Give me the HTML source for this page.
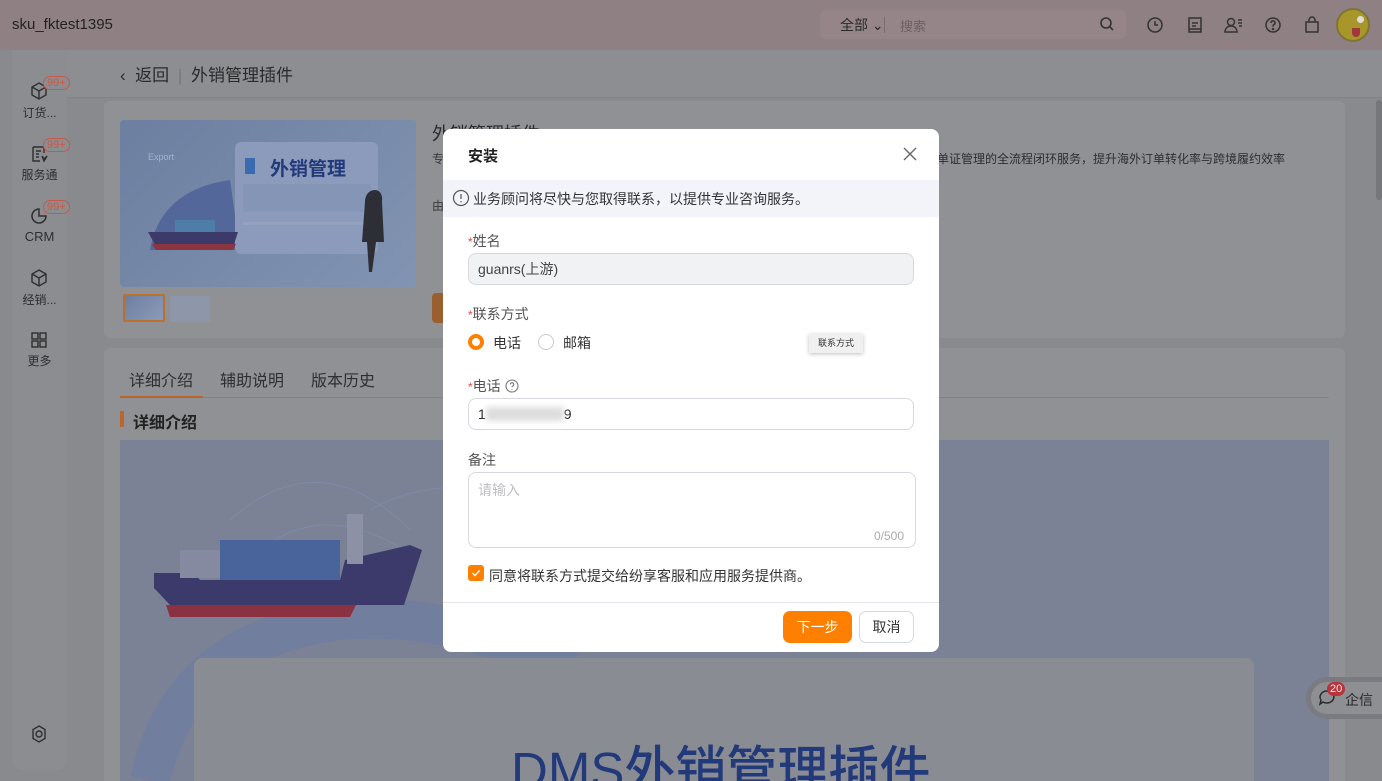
<!DOCTYPE html>
<html><head><meta charset="utf-8">
<style>
*{box-sizing:border-box;margin:0;padding:0}
html,body{width:1382px;height:781px;overflow:hidden}
body{position:relative;background:#898a8e;font-family:"Liberation Sans","Noto Sans CJK SC",sans-serif;color:#333}
.abs{position:absolute}
.hdr{left:0;top:0;width:1382px;height:50px;background:#8f8084}
.side{left:12px;top:50px;width:55px;height:720px;background:#8c8d91;border-radius:0 0 10px 10px}
.crumb{left:67px;top:50px;width:1315px;height:48px;background:#8d8e92;border-bottom:1px solid #828388}
.card{background:#909195;border-radius:6px}
.sitem{position:absolute;left:12px;width:55px;text-align:center;font-size:12px;color:#2e2e30}
.badge{position:absolute;left:43px;font-size:11px;color:#c55a4a;border:1px solid #c55a4a;border-radius:8px;padding:0 3px;line-height:12px;background:#8c8d91}
.modal{left:443px;top:129px;width:496px;height:523px;background:#fff;border-radius:8px;overflow:hidden}
.lbl{position:absolute;left:25px;font-size:14px;color:#555}
.lbl b{color:#e5483a;font-weight:normal;font-size:12px}
.inp{position:absolute;left:25px;width:446px;height:32px;border:1px solid #d6d8de;border-radius:8px;font-size:14px;padding-left:9px;line-height:30px}
</style></head><body>
<div class="abs hdr"></div>
<div class="abs" style="left:12px;top:16px;font-size:15px;color:#222">sku_fktest1395</div>
<div class="abs" style="left:820px;top:10px;width:306px;height:29px;background:#958589;border-radius:6px"></div>
<div class="abs" style="left:840px;top:15px;font-size:14px;color:#2a2a2a">全部 ⌄</div>
<div class="abs" style="left:884px;top:17px;width:1px;height:16px;background:#7a6c70"></div>
<div class="abs" style="left:900px;top:16px;font-size:13px;color:#6c6064">搜索</div>
<svg class="abs" style="left:1098px;top:15px" width="18" height="18" viewBox="0 0 18 18" fill="none" stroke="#333" stroke-width="1.6"><circle cx="8" cy="8" r="5"/><path d="M12 12l3 3"/></svg>
<svg class="abs" style="left:1144px;top:14px" width="22" height="22" viewBox="0 0 22 22" fill="none" stroke="#333" stroke-width="1.5"><circle cx="11" cy="11" r="7"/><path d="M11 7v4h3"/></svg>
<svg class="abs" style="left:1184px;top:14px" width="22" height="22" viewBox="0 0 22 22" fill="none" stroke="#333" stroke-width="1.5"><path d="M5 4h12v14H5z"/><path d="M8 9h6M8 12h4M5 15h12"/></svg>
<svg class="abs" style="left:1222px;top:14px" width="24" height="22" viewBox="0 0 24 22" fill="none" stroke="#333" stroke-width="1.5"><circle cx="9" cy="8" r="3.5"/><path d="M3 18c0-4 3-6 6-6s6 2 6 6zM16 6h4M16 9h4M17 12h3"/></svg>
<svg class="abs" style="left:1262px;top:14px" width="22" height="22" viewBox="0 0 22 22" fill="none" stroke="#333" stroke-width="1.5"><circle cx="11" cy="11" r="7"/><path d="M9 9a2 2 0 1 1 3 1.6c-1 .5-1 1-1 2"/><circle cx="11" cy="15" r=".5"/></svg>
<svg class="abs" style="left:1301px;top:14px" width="22" height="22" viewBox="0 0 22 22" fill="none" stroke="#333" stroke-width="1.5"><path d="M5 8h12v10H5zM8 8V6a3 3 0 0 1 6 0v2"/></svg>
<div class="abs" style="left:1336px;top:8px;width:34px;height:34px;border-radius:50%;background:#a8962a;border:2px solid #7d7436"></div>
<div class="abs" style="left:1352px;top:28px;width:8px;height:9px;background:#a0383c;border-radius:0 0 5px 5px"></div>
<div class="abs" style="left:1357px;top:16px;width:7px;height:7px;border-radius:50%;background:#ddd"></div>

<div class="abs side"></div>
<div class="abs crumb"></div>
<div class="abs" style="left:120px;top:61px;font-size:17px;color:#2a2a2c">&lsaquo;&nbsp; 返回 <span style="color:#777;margin:0 4px">|</span> 外销管理插件</div>

<svg class="abs" style="left:29px;top:81px" width="20" height="20" viewBox="0 0 20 20" fill="none" stroke="#2e2e30" stroke-width="1.4"><path d="M10 2l7 4v8l-7 4-7-4V6zM3 6l7 4 7-4M10 10v8"/></svg>
<div class="badge" style="top:76px">99+</div>
<div class="sitem" style="top:104px">订货...</div>
<svg class="abs" style="left:29px;top:144px" width="20" height="20" viewBox="0 0 20 20" fill="none" stroke="#2e2e30" stroke-width="1.4"><path d="M4 3h11v6M4 3v14h7M7 7h5M7 10h3M7 13h3"/><path d="M13 12l2 3 3-3-3 5z"/></svg>
<div class="badge" style="top:138px">99+</div>
<div class="sitem" style="top:166px">服务通</div>
<svg class="abs" style="left:29px;top:206px" width="20" height="20" viewBox="0 0 20 20" fill="none" stroke="#2e2e30" stroke-width="1.5"><path d="M10 3a7 7 0 1 0 7 7h-7z"/></svg>
<div class="badge" style="top:200px">99+</div>
<div class="sitem" style="top:229px;font-size:13px">CRM</div>
<svg class="abs" style="left:29px;top:268px" width="20" height="20" viewBox="0 0 20 20" fill="none" stroke="#2e2e30" stroke-width="1.4"><path d="M10 2l7 4v8l-7 4-7-4V6zM3 6l7 4 7-4M10 10v8"/></svg>
<div class="sitem" style="top:291px">经销...</div>
<svg class="abs" style="left:30px;top:331px" width="18" height="18" viewBox="0 0 18 18" fill="none" stroke="#2e2e30" stroke-width="1.4"><rect x="2" y="2" width="6" height="6"/><rect x="10" y="2" width="6" height="6"/><rect x="2" y="10" width="6" height="6"/><rect x="10" y="10" width="6" height="6"/></svg>
<div class="sitem" style="top:352px">更多</div>
<svg class="abs" style="left:29px;top:724px" width="20" height="20" viewBox="0 0 20 20" fill="none" stroke="#2e2e30" stroke-width="1.4"><path d="M10 2l6 3.5v9L10 18l-6-3.5v-9z"/><circle cx="10" cy="10" r="3"/></svg>

<div class="abs card" style="left:104px;top:101px;width:1241px;height:237px"></div>
<div class="abs" style="left:120px;top:120px;width:296px;height:167px;border-radius:4px;background:linear-gradient(135deg,#6d7fa0,#8194b3)"></div>
<svg class="abs" style="left:120px;top:120px" width="296" height="167">
<text x="28" y="40" font-size="9" fill="#a4b2cc" font-family="Liberation Sans">Export</text>
<path d="M30 130 Q40 70 110 60 L120 130z" fill="#53679a"/>
<rect x="115" y="22" width="143" height="112" rx="6" fill="#8c9abb"/>
<rect x="125" y="38" width="10" height="16" fill="#3a6ab0"/>
<text x="150" y="55" font-size="19" fill="#233a7a" font-family="Noto Sans CJK SC" font-weight="bold">外销管理</text>
<rect x="123" y="64" width="128" height="28" fill="#8595b6"/>
<rect x="123" y="102" width="128" height="3" fill="#95a2bf"/>
<path d="M28 112h90l-6 18H38z" fill="#3b3a68"/><path d="M32 124h84l-3 6H36z" fill="#8c3540"/>
<rect x="55" y="100" width="40" height="12" fill="#4e7ea8"/>
<path d="M255 70c5 0 8 5 7 12l2 40h-8l-4 30h-3l-2-30h-5l3-40c0-8 5-12 10-12z" fill="#2e2e36"/>
</svg>
<div class="abs" style="left:123px;top:294px;width:42px;height:28px;border:2px solid #b9702f;background:linear-gradient(135deg,#6d7fa0,#8d9ab8);border-radius:2px"></div>
<div class="abs" style="left:170px;top:296px;width:40px;height:26px;background:#8e97aa;border-radius:2px"></div>
<div class="abs" style="left:432px;top:120px;font-size:18px;color:#2a2a2c">外销管理插件</div>
<div class="abs" style="left:432px;top:150px;font-size:12px;color:#3a3a3c">专</div>
<div class="abs" style="left:432px;top:197px;font-size:12px;color:#3a3a3c">由</div>
<div class="abs" style="left:432px;top:293px;width:20px;height:30px;background:#9a5f2e;border-radius:4px"></div>
<div class="abs" style="left:937px;top:150px;font-size:12px;color:#2e2e30">单证管理的全流程闭环服务，提升海外订单转化率与跨境履约效率</div>

<div class="abs card" style="left:104px;top:348px;width:1241px;height:440px"></div>
<div class="abs" style="left:129px;top:367px;font-size:16px;color:#2f2f31">详细介绍</div>
<div class="abs" style="left:220px;top:367px;font-size:16px;color:#2f2f31">辅助说明</div>
<div class="abs" style="left:311px;top:367px;font-size:16px;color:#2f2f31">版本历史</div>
<div class="abs" style="left:120px;top:397px;width:1209px;height:1px;background:#7f8190"></div>
<div class="abs" style="left:120px;top:396px;width:83px;height:2px;background:#b9662d"></div>
<div class="abs" style="left:120px;top:411px;width:4px;height:16px;background:#b9662d"></div>
<div class="abs" style="left:133px;top:409px;font-size:16px;font-weight:bold;color:#222">详细介绍</div>
<div class="abs" style="left:120px;top:440px;width:1209px;height:341px;background:#7b8296"></div>
<svg class="abs" style="left:120px;top:440px" width="1209" height="341" fill="none">
<path d="M30 341 Q60 200 220 180 Q330 170 450 230" stroke="#6a7aa6" stroke-width="40" opacity=".5"/>
<path d="M110 80 Q200 0 290 90" stroke="#7f8aa8"/>
<path d="M130 120 Q200 50 300 120" stroke="#7f8aa8"/>
<path d="M250 70 Q320 30 420 60" stroke="#7f8aa8"/>
<path d="M34 133h40l6 7h140l5-20 65-15 12 5-18 55H50L34 148z" fill="#3c3a6a"/>
<path d="M46 165h190l-6 12H50z" fill="#8a3242"/>
<rect x="100" y="100" width="120" height="40" fill="#43619a" opacity=".9"/>
<rect x="60" y="110" width="40" height="28" fill="#858aa0"/>
<rect x="227" y="74" width="16" height="50" fill="#8d91a6"/>
</svg>
<div class="abs" style="left:194px;top:658px;width:1060px;height:130px;background:#8a8c93;border-radius:8px"></div>
<div class="abs" style="left:511px;top:740px;font-size:51px;color:#233a7a;font-weight:500;white-space:nowrap;line-height:1.2">DMS外销管理插件</div>

<div class="abs" style="left:1376px;top:100px;width:6px;height:100px;background:#76777b;border-radius:3px"></div>
<div class="abs" style="left:1306px;top:677px;width:80px;height:42px;border-radius:21px 0 0 21px;background:#7a7b80"></div>
<div class="abs" style="left:1311px;top:682px;width:75px;height:32px;border-radius:16px 0 0 16px;background:#8e8f93"></div>
<svg class="abs" style="left:1316px;top:687px" width="22" height="22" viewBox="0 0 22 22" fill="none" stroke="#2b2b2d" stroke-width="1.5"><path d="M11 4a7 6 0 1 1-4 11l-3 2 1-4a7 6 0 0 1 6-9z"/></svg>
<div class="abs" style="left:1327px;top:682px;font-size:11px;color:#eee;background:#b6343a;border-radius:8px;padding:0 3px;line-height:14px">20</div>
<div class="abs" style="left:1345px;top:690px;font-size:14px;color:#2b2b2d">企信</div>

<div class="abs modal">
  <div class="abs" style="left:25px;top:16px;font-size:15px;font-weight:bold;color:#1f1f1f">安装</div>
  <svg class="abs" style="left:459px;top:17px" width="16" height="16" viewBox="0 0 16 16" stroke="#666" stroke-width="1.4"><path d="M2 2l12 12M14 2L2 14"/></svg>
  <div class="abs" style="left:0;top:51px;width:496px;height:37px;background:#f3f3fa"></div>
  <svg class="abs" style="left:9px;top:60px" width="18" height="18" viewBox="0 0 18 18" fill="none" stroke="#555" stroke-width="1.2"><circle cx="9" cy="9" r="7.5"/><path d="M9 5v5M9 12v1.3"/></svg>
  <div class="abs" style="left:30px;top:60px;font-size:14px;color:#333">业务顾问将尽快与您取得联系，以提供专业咨询服务。</div>
  <div class="lbl" style="top:102px"><b>*</b>姓名</div>
  <div class="inp" style="top:124px;background:#f1f2f4;color:#444">guanrs(上游)</div>
  <div class="lbl" style="top:175px"><b>*</b>联系方式</div>
  <div class="abs" style="left:25px;top:205px;width:16px;height:16px;border-radius:50%;border:4px solid #ff8000"></div>
  <div class="abs" style="left:50px;top:204px;font-size:14px;color:#333">电话</div>
  <div class="abs" style="left:95px;top:205px;width:16px;height:16px;border-radius:50%;border:1px solid #c8cad0"></div>
  <div class="abs" style="left:120px;top:204px;font-size:14px;color:#333">邮箱</div>
  <div class="abs" style="left:366px;top:205px;width:54px;height:19px;background:#f0f0f0;box-shadow:0 1px 4px rgba(0,0,0,.25);font-size:9px;color:#333;text-align:center;line-height:19px">联系方式</div>
  <div class="lbl" style="top:247px"><b>*</b>电话 <svg style="vertical-align:-2px" width="14" height="14" viewBox="0 0 14 14" fill="none" stroke="#777" stroke-width="1.1"><circle cx="7" cy="7" r="6"/><path d="M5.3 5.5a1.7 1.7 0 1 1 2.4 1.5c-.6.3-.7.7-.7 1.3M7 10v.6"/></svg></div>
  <div class="inp" style="top:269px;background:#fff;color:#222">1<span style="display:inline-block;width:78px;height:14px;background:#ddd;filter:blur(3px);vertical-align:-2px"></span>9</div>
  <div class="lbl" style="top:321px">备注</div>
  <div class="abs" style="left:25px;top:343px;width:448px;height:76px;border:1px solid #d6d8de;border-radius:8px"></div>
  <div class="abs" style="left:35px;top:351px;font-size:14px;color:#c0c0c4">请输入</div>
  <div class="abs" style="left:431px;top:400px;font-size:12px;color:#aaa">0/500</div>
  <div class="abs" style="left:25px;top:436px;width:16px;height:16px;border-radius:3px;background:#ff8000"></div>
  <svg class="abs" style="left:28px;top:439px" width="10" height="10" viewBox="0 0 10 10" fill="none" stroke="#fff" stroke-width="1.4"><path d="M1.5 5l2.5 2.5 4.5-5"/></svg>
  <div class="abs" style="left:46px;top:437px;font-size:14px;color:#333">同意将联系方式提交给纷享客服和应用服务提供商。</div>
  <div class="abs" style="left:0;top:473px;width:496px;height:1px;background:#e4e5ea"></div>
  <div class="abs" style="left:340px;top:482px;width:69px;height:32px;background:#ff8000;border-radius:7px;color:#fff;font-size:14px;text-align:center;line-height:32px">下一步</div>
  <div class="abs" style="left:416px;top:482px;width:55px;height:32px;border:1px solid #d6d8de;border-radius:7px;color:#333;font-size:14px;text-align:center;line-height:30px">取消</div>
</div>
</body></html>
